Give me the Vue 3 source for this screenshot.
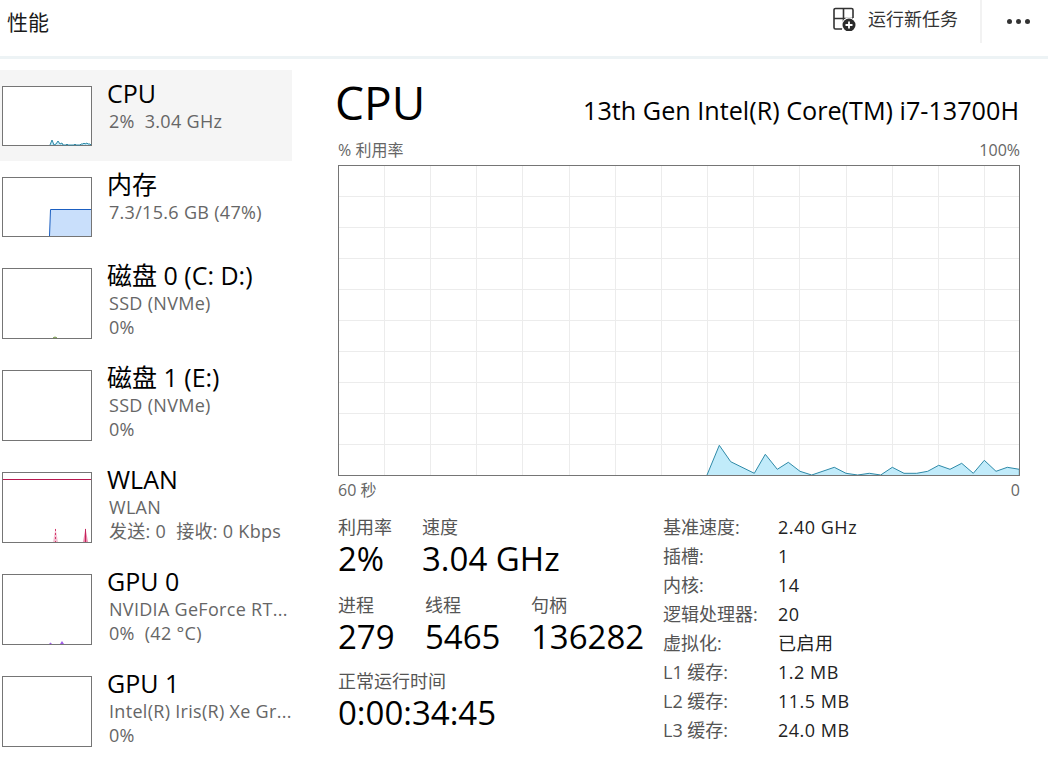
<template>
  <div class="app">
    <header class="top">
      <div class="page-title">性能</div>
      <div class="actions">
        <button class="run">
          <svg width="24" height="24" viewBox="0 0 24 24" fill="none">
            <path d="M9 22H2.5A1.5 1.5 0 0 1 1 20.5V3A1.5 1.5 0 0 1 2.5 1.5H18.5A1.5 1.5 0 0 1 20 3V11" stroke="#333" stroke-width="1.6" />
            <path d="M1 11.5H20M10.5 1.5V22" stroke="#333" stroke-width="1.6" />
            <circle cx="16" cy="18" r="7.5" fill="#fff" />
            <circle cx="16" cy="18" r="6.5" fill="#2b2b2b" />
            <path d="M12.5 18h7M16 14.5v7" stroke="#fff" stroke-width="1.8" />
          </svg>
          <span>运行新任务</span>
        </button>
        <div class="more"><i></i><i></i><i></i></div>
      </div>
    </header>

    <div class="body">
      <aside class="side">
        <div v-for="item in items" :key="item.name" class="item" :class="{ active: item.active, tall: item.tall }">
          <svg class="thumb" :width="90" :height="item.tall ? 71 : 60">
            <rect x="0.5" y="0.5" width="89" :height="item.tall ? 70 : 59" fill="#fff" stroke="#757575" />
            <polygon v-for="f in item.fills" :key="f.points" :points="f.points" :fill="f.color" />
            <polyline
              v-for="l in item.lines"
              :key="l.points"
              :points="l.points"
              fill="none"
              :stroke="l.color"
              :stroke-dasharray="l.dash"
            />
          </svg>
          <div class="info">
            <div class="name">{{ item.name }}</div>
            <div v-for="s in item.sub" :key="s" class="sub">{{ s }}</div>
          </div>
        </div>
      </aside>

      <main class="panel">
        <div class="head">
          <div class="big">CPU</div>
          <div class="model">13th Gen Intel(R) Core(TM) i7-13700H</div>
        </div>
        <div class="axis top-axis"><span>% 利用率</span><span>100%</span></div>
        <svg class="chart" width="682" height="311" viewBox="338 165 682 311">
          <line v-for="x in vLines" :key="x" :x1="x" :x2="x" y1="165" y2="476" stroke="#ececec" />
          <line v-for="y in hLines" :key="y" x1="338" x2="1020" :y1="y" :y2="y" stroke="#ececec" />
          <polygon :points="cpuPoints" fill="#c1ebfa" stroke="none" />
          <polyline :points="cpuPoints" fill="none" stroke="#2f8aa8" stroke-width="1" />
          <rect x="338.5" y="165.5" width="681" height="310" fill="none" stroke="#757575" />
        </svg>
        <div class="axis bottom-axis"><span>60 秒</span><span>0</span></div>

        <div class="stats">
          <div class="live">
            <div class="row first">
              <div class="stat w-util"><label>利用率</label><b>2%</b></div>
              <div class="stat"><label>速度</label><b>3.04 GHz</b></div>
            </div>
            <div class="row second">
              <div class="stat w-proc"><label>进程</label><b>279</b></div>
              <div class="stat w-thread"><label>线程</label><b>5465</b></div>
              <div class="stat"><label>句柄</label><b>136282</b></div>
            </div>
            <div class="row">
              <div class="stat"><label>正常运行时间</label><b>0:00:34:45</b></div>
            </div>
          </div>
          <dl class="specs">
            <template v-for="s in specs" :key="s[0]">
              <dt>{{ s[0] }}</dt>
              <dd>{{ s[1] }}</dd>
            </template>
          </dl>
        </div>
      </main>
    </div>
  </div>
</template>

<script setup>
const cpuData = [
  [707, 475], [719.3, 445.3], [730.7, 461.7], [754.3, 473.3], [765.3, 454.3], [777.3, 469.3],
  [788.3, 462.3], [800, 471.3], [811.7, 475], [834.3, 467.3], [846, 473.3], [857.7, 475],
  [869.3, 473.3], [880.7, 475], [892.3, 467.3], [904, 473.3], [916.7, 473.3], [927.7, 471.3],
  [938.7, 465.3], [950, 469.3], [961.7, 463.3], [973.3, 473.3], [984.3, 460.3], [996, 471.3],
  [1007.3, 467.3], [1019.3, 469.3],
];
const cpuPoints = cpuData.map((p) => p.join(",")).join(" ") + " 1019.3,475";

const vLines = Array.from({ length: 14 }, (_, i) => Math.round(384 + i * 46.15) + 0.5);
const hLines = Array.from({ length: 9 }, (_, i) => Math.round(196 + i * 31) + 0.5);

const cpuThumb = "48,59 50,54 52,59 54,58 56,55 58,58 60,57 61,59 64,59 65,58 66,59 72,59 73,58 74,59 78,59 79,58 81,58 82,57 83,58 85,57 86,58 88,58 89,59";

const items = [
  {
    name: "CPU",
    sub: ["2%  3.04 GHz"],
    active: true,
    fills: [{ points: cpuThumb, color: "#c1ebfa" }],
    lines: [{ points: cpuThumb, color: "#2f8aa8" }],
  },
  {
    name: "内存",
    sub: ["7.3/15.6 GB (47%)"],
    fills: [{ points: "47.5,59 48.5,32.5 89,32.5 89,59", color: "#c9dffb" }],
    lines: [{ points: "47.5,59 48.5,32.5 89,32.5", color: "#1b5fc1" }],
  },
  {
    name: "磁盘 0 (C: D:)",
    sub: ["SSD (NVMe)", "0%"],
    tall: true,
    lines: [{ points: "51,70 53,69 55,70", color: "#6a8f3a" }],
  },
  { name: "磁盘 1 (E:)", sub: ["SSD (NVMe)", "0%"], tall: true },
  {
    name: "WLAN",
    sub: ["WLAN", "发送: 0  接收: 0 Kbps"],
    tall: true,
    fills: [
      { points: "51,70 53.5,56 56,70", color: "#f3c3d4" },
      { points: "81,70 83.5,56 86,70", color: "#ec8fb0" },
    ],
    lines: [
      { points: "1,7.5 89,7.5", color: "#b8174f" },
      { points: "53.5,57 53.5,70", color: "#d4376b", dash: "2 2" },
      { points: "83.5,57 83.5,70", color: "#c4245c" },
    ],
  },
  {
    name: "GPU 0",
    sub: ["NVIDIA GeForce RT...", "0%  (42 °C)"],
    tall: true,
    fills: [
      { points: "47,70 48.5,68.5 50,70", color: "#a05ce8" },
      { points: "58,70 60,67 62,70", color: "#a05ce8" },
    ],
  },
  { name: "GPU 1", sub: ["Intel(R) Iris(R) Xe Gr...", "0%"], tall: true },
];

const specs = [
  ["基准速度:", "2.40 GHz"],
  ["插槽:", "1"],
  ["内核:", "14"],
  ["逻辑处理器:", "20"],
  ["虚拟化:", "已启用"],
  ["L1 缓存:", "1.2 MB"],
  ["L2 缓存:", "11.5 MB"],
  ["L3 缓存:", "24.0 MB"],
];
</script>

<style>
html,
body {
  margin: 0;
  background: #fff;
  overflow: hidden;
}
</style>

<style scoped>
.app {
  width: 1048px;
  height: 763px;
  overflow: hidden;
  background: #fff;
  color: #000;
  font-family: "Open Sans", "Noto Sans CJK SC", sans-serif;
}

.top {
  display: flex;
  justify-content: space-between;
  height: 56px;
  border-bottom: 3px solid #edf3f5;
}

.page-title {
  padding: 7px 0 0 7px;
  font-size: 21px;
  line-height: 30px;
  color: #1a1a1a;
}

.actions {
  display: flex;
  height: 43px;
}

.run {
  display: flex;
  align-items: flex-start;
  gap: 11px;
  padding: 7px 22px 0 0;
  border: 0;
  border-right: 2px solid #f2f2f2;
  background: none;
  font: inherit;
  font-size: 18px;
  line-height: 25px;
  color: #333;
}

.more {
  display: flex;
  gap: 4px;
  width: 66px;
  padding-top: 19px;
  padding-left: 25px;
  box-sizing: border-box;
}

.more i {
  width: 5px;
  height: 5px;
  border-radius: 50%;
  background: #333;
}

.body {
  display: flex;
}

.side {
  width: 292px;
  padding-top: 11px;
}

.item {
  display: flex;
  height: 91px;
  padding-left: 2px;
  box-sizing: border-box;
}

.item.tall {
  height: 102px;
}

.item.active {
  background: #f5f5f5;
}

.thumb {
  flex: none;
  margin-top: 16px;
}

.info {
  margin-left: 15px;
  padding-top: 7px;
}

.name {
  font-size: 25px;
  line-height: 33px;
  white-space: nowrap;
}

.sub {
  margin-left: 2px;
  font-size: 18px;
  letter-spacing: 0.3px;
  line-height: 24px;
  margin-top: -1px;
  margin-bottom: 1px;
  color: #666;
  white-space: pre;
}

.panel {
  flex: 1;
  padding: 0 28px 0 46px;
  min-width: 0;
}

.head {
  display: flex;
  justify-content: space-between;
  align-items: flex-end;
  height: 78px;
}

.big {
  margin-left: -3px;
  font-size: 46px;
  line-height: 62px;
  height: 62px;
  margin-bottom: 4px;
}

.model {
  font-size: 25.2px;
  line-height: 33px;
  margin-bottom: 10px;
  margin-right: 1px;
}

.axis {
  display: flex;
  justify-content: space-between;
  font-size: 16px;
  line-height: 20px;
  color: #666;
}

.top-axis {
  height: 28px;
  padding-top: 3px;
  box-sizing: border-box;
}

.bottom-axis {
  height: 30px;
  padding-top: 4px;
  box-sizing: border-box;
}

.chart {
  display: block;
}

.stats {
  display: flex;
  margin-top: 10px;
}

.live {
  width: 325px;
  flex: none;
}

.row {
  display: flex;
  height: 73px;
}

.row.first {
  height: 78px;
}

.row.second {
  height: 76px;
}

.stat label {
  display: block;
  font-size: 18px;
  line-height: 22px;
  color: #555;
}

.stat b {
  display: block;
  font-weight: 400;
  font-size: 33px;
  line-height: 42px;
}

.w-util {
  width: 84px;
}

.w-proc {
  width: 87px;
}

.w-thread {
  width: 106px;
}

.specs {
  display: grid;
  grid-template-columns: 115px 1fr;
  grid-auto-rows: 29px;
  margin: 0;
  font-size: 18px;
  line-height: 22px;
}

.specs dt {
  color: #555;
}

.specs dd {
  margin: 0;
  letter-spacing: 0.5px;
  color: #222;
}
</style>
